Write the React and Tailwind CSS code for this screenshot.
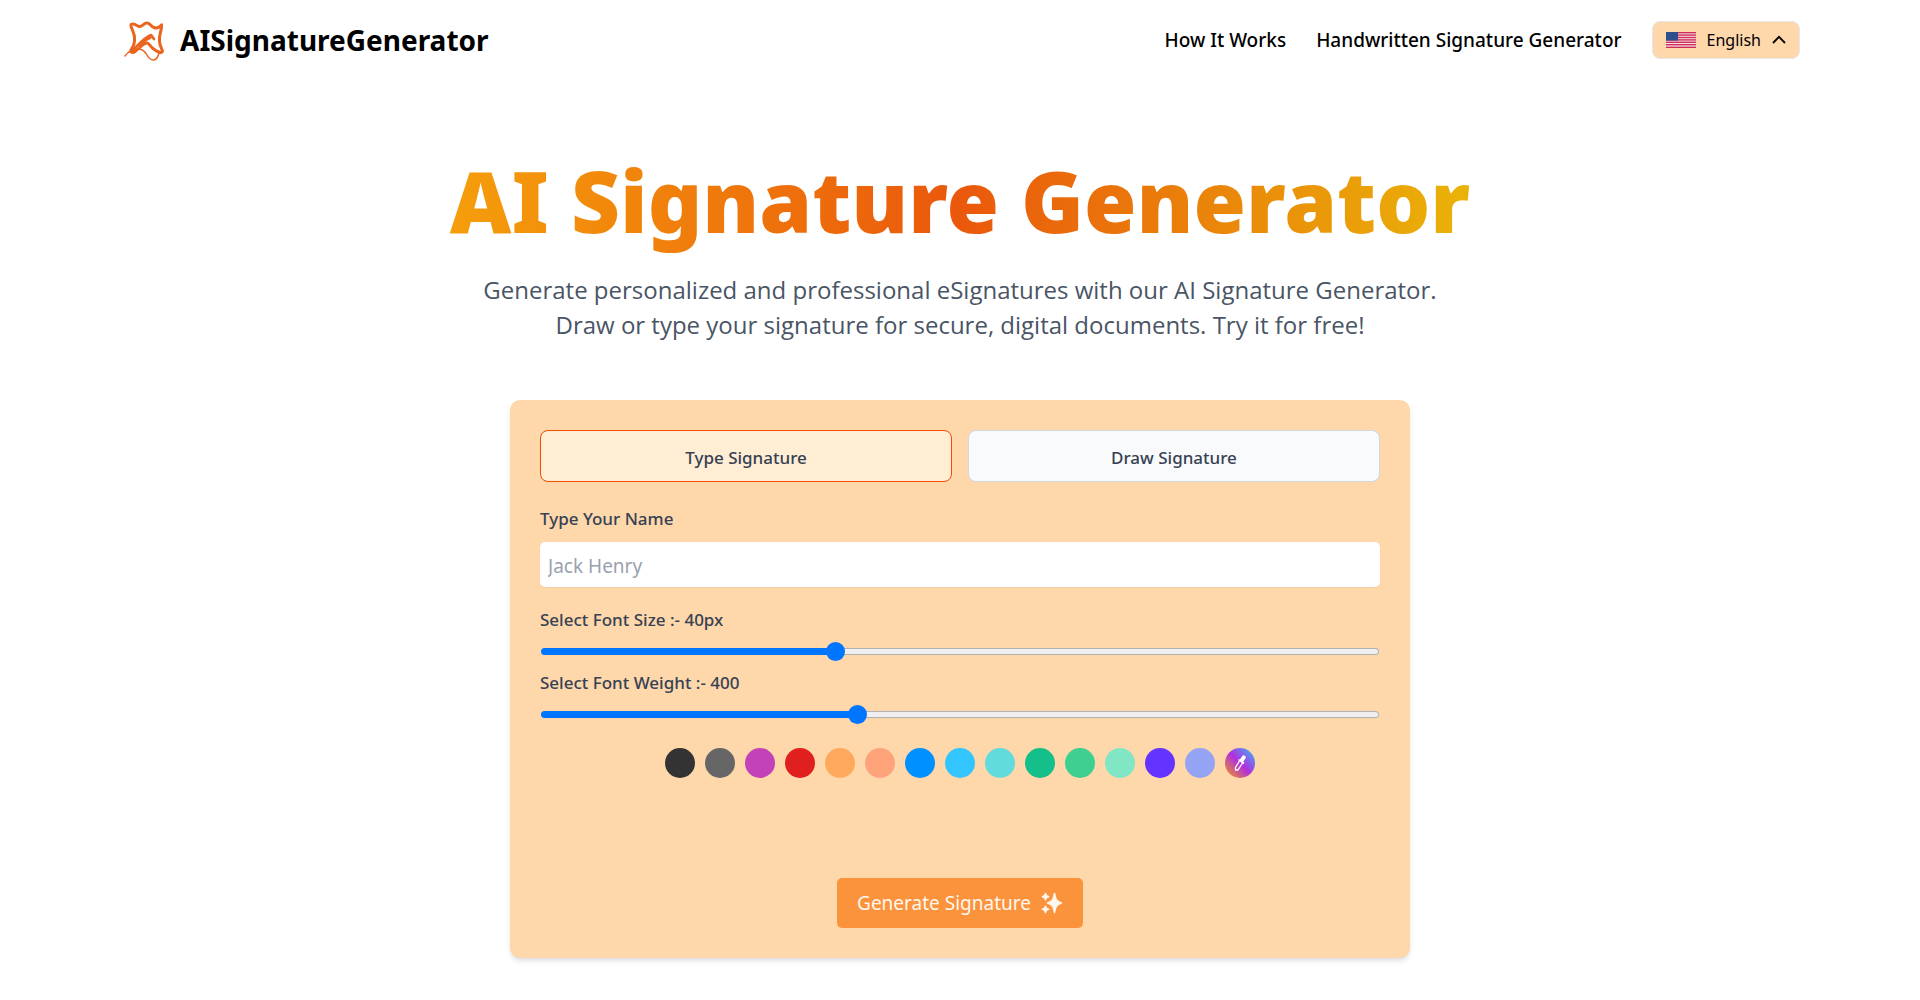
import { useState } from "react";

const swatches = [
  ["Black", "bg-[#333333]"],
  ["Gray", "bg-[#666666]"],
  ["Magenta", "bg-[#c342b8]"],
  ["Red", "bg-[#e01f1f]"],
  ["Orange", "bg-[#ffa95c]"],
  ["Salmon", "bg-[#ffa37a]"],
  ["Blue", "bg-[#0090ff]"],
  ["Sky", "bg-[#33c5ff]"],
  ["Aqua", "bg-[#61dbdb]"],
  ["Emerald", "bg-[#14bf8a]"],
  ["Green", "bg-[#3dd090]"],
  ["Mint", "bg-[#80e6c3]"],
  ["Violet", "bg-[#6333ff]"],
  ["Periwinkle", "bg-[#94a3f3]"],
];

function Logo() {
  return (
    <svg viewBox="0 0 50 50" className="size-[50px]" fill="none" stroke="#ea6520" strokeLinecap="round" strokeLinejoin="round" aria-hidden="true">
      <path d="M41.500 10 Q38 14 34 12.500 C30 11 30 8 27 8 C23 8 23 12 19 11.500 C16 10.500 14 8 11 9.500 C10 11 14 17 14.500 22 C15 27 13 32 11.500 34 C9.500 37 12 38.500 15 36.500" strokeWidth="3" />
      <path d="M41.500 10 C42 16 38.500 20 39.500 26 C39.500 31 42 34 42.500 36 C42 39.500 36 36 33 33.500 C30 31 29 28 27 28 C23 28 19 34 14 37" strokeWidth="3" />
      <path d="M13 35 C19 29 25 22 31 20 C32 21 33 23 34 24 M20 31 C23 27 26 24 30 23" strokeWidth="2.600" />
      <path d="M5 41 C8 37 12 34 18 34 C23 34 24 36 26 38.500 C28 42 31 45.500 34 45 C37 44.500 38 42 39 38" strokeWidth="1.500" />
    </svg>
  );
}

function Flag() {
  return (
    <svg viewBox="0 0 30 16" className="h-4 w-[30px]" aria-hidden="true">
      <rect width="30" height="16" fill="#f6e3ea" />
      {[0, 2.4, 4.8, 7.2, 9.6, 12, 14.6].map((y) => (
        <rect key={y} y={y} width="30" height="1.400" fill="#cf2d58" />
      ))}
      <rect width="12" height="8.500" fill="#1f3f80" />
      {[1, 3, 5, 7].map((y) =>
        [1, 3, 5, 7, 9, 11].map((x) => <circle key={x + "-" + y} cx={x} cy={y} r="0.450" fill="#a9bbdf" />)
      )}
    </svg>
  );
}

function Sparkles() {
  return (
    <svg viewBox="0 0 22 22" className="size-[22px]" fill="currentColor" aria-hidden="true">
      <path d="M13.500 1.500 C14.500 7.500 15.500 9.500 20.500 11 C15.500 12.500 14.500 14.500 13.500 20.500 C12.500 14.500 11.500 12.500 6.500 11 C11.500 9.500 12.500 7.500 13.500 1.500Z" stroke="currentColor" strokeWidth="1.600" strokeLinejoin="round" />
      <path d="M4.500 1.500 Q5 4.200 7.700 4.700 Q5 5.200 4.500 7.900 Q4 5.200 1.300 4.700 Q4 4.200 4.500 1.500Z M4.500 14.100 Q5 16.800 7.700 17.300 Q5 17.800 4.500 20.500 Q4 17.800 1.300 17.300 Q4 16.800 4.500 14.100Z" stroke="currentColor" strokeWidth="1.400" strokeLinejoin="round" />
    </svg>
  );
}

function Dropper() {
  return (
    <svg viewBox="0 0 18 18" className="size-[18px]" fill="none" stroke="#fff" strokeLinecap="round" strokeLinejoin="round" aria-hidden="true">
      <path d="M8.500 7 L4.500 13.500 L4.500 16 L7 16 L11.500 9" strokeWidth="1.300" />
      <path d="M8 6 L12.500 9" strokeWidth="1.600" />
      <path d="M11 6 L12.800 3.400" strokeWidth="4" />
    </svg>
  );
}

function Slider({ id, label, min, max, step, value, onChange }) {
  const fill = ((value - min) / (max - min)) * 100 + "%";
  return (
    <>
      <label htmlFor={id} className="text-[17px] leading-[25px] font-medium text-gray-700">
        {label}
      </label>
      <input
        id={id}
        type="range"
        min={min}
        max={max}
        step={step}
        value={value}
        onChange={(e) => onChange(Number(e.target.value))}
        style={{ "--fill": fill }}
        className="mx-px mt-[9px] mb-[9px] h-5 appearance-none bg-transparent [&::-webkit-slider-runnable-track]:h-[7px] [&::-webkit-slider-runnable-track]:rounded-full [&::-webkit-slider-runnable-track]:border [&::-webkit-slider-runnable-track]:border-transparent [&::-webkit-slider-runnable-track]:[background:linear-gradient(to_right,#0075ff_var(--fill),#efefef_var(--fill))_padding-box,linear-gradient(to_right,#0075ff_var(--fill),#b2b2b2_var(--fill))_border-box] [&::-webkit-slider-thumb]:-mt-[7px] [&::-webkit-slider-thumb]:size-[19px] [&::-webkit-slider-thumb]:appearance-none [&::-webkit-slider-thumb]:rounded-full [&::-webkit-slider-thumb]:bg-[#0075ff]"
      />
    </>
  );
}

export default function App() {
  const [mode, setMode] = useState("type");
  const [name, setName] = useState("");
  const [size, setSize] = useState(40);
  const [weight, setWeight] = useState(400);
  const tab = "flex-1 h-[52px] rounded-lg border pt-[3px] text-[17px] font-medium text-gray-700";
  const active = " border-orange-600 bg-orange-100";
  const idle = " border-gray-300 bg-gray-50";

  return (
    <div className="min-h-screen bg-white font-['Noto_Sans','Open_Sans',sans-serif] text-black">
      <header className="mx-auto flex h-20 max-w-[1680px] items-center justify-between">
        <a href="#" className="flex items-center gap-[10px] text-[28px] leading-9 font-bold">
          <Logo />
          AISignatureGenerator
        </a>
        <nav className="flex items-center gap-[30px] text-[19px] font-medium">
          <a href="#how">How It Works</a>
          <a href="#handwritten">Handwritten Signature Generator</a>
          <button type="button" className="flex h-[38px] items-center gap-[11px] rounded-lg border border-gray-200 bg-[#fed7aa] px-[13px] text-[16px] font-normal">
            <Flag />
            English
            <svg viewBox="0 0 14 10" className="h-[10px] w-[14px]" fill="none" stroke="currentColor" strokeWidth="1.800" aria-hidden="true">
              <path d="M1 8 L7 1.800 L13 8" />
            </svg>
          </button>
        </nav>
      </header>

      <main className="px-5 pt-16 pb-10">
        <h1 className="mx-auto w-fit bg-linear-to-r/srgb from-[#f59e0b] via-[#ea580c] to-[#eab308] bg-clip-text text-center text-[85px] leading-[112px] font-black text-transparent">
          AI Signature Generator
        </h1>
        <p className="mt-4 text-center font-['Open_Sans','Noto_Sans',sans-serif] text-[24px] leading-[35px] text-gray-600">
          Generate personalized and professional eSignatures with our AI Signature Generator.
          <br />
          Draw or type your signature for secure, digital documents. Try it for free!
        </p>

        <section className="mx-auto mt-[58px] flex max-w-[900px] flex-col rounded-[10px] bg-[#fed7aa] p-[30px] shadow-md">
          <div className="flex gap-4">
            <button type="button" onClick={() => setMode("type")} className={tab + (mode === "type" ? active : idle)}>
              Type Signature
            </button>
            <button type="button" onClick={() => setMode("draw")} className={tab + (mode === "draw" ? active : idle)}>
              Draw Signature
            </button>
          </div>

          <label htmlFor="name" className="mt-6 text-[17px] leading-[25px] font-medium text-gray-700">
            Type Your Name
          </label>
          <input
            id="name"
            value={name}
            onChange={(e) => setName(e.target.value)}
            placeholder="Jack Henry"
            className="mt-[11px] mb-5 h-[45px] rounded-[5px] bg-white px-2 pt-[3px] text-[19px] shadow-xs placeholder:text-gray-400"
          />

          <Slider id="size" label={"Select Font Size :- " + size + "px"} min={24} max={70} step={1} value={size} onChange={setSize} />
          <Slider id="weight" label={"Select Font Weight :- " + weight} min={100} max={900} step={100} value={weight} onChange={setWeight} />

          <div className="mt-[15px] flex flex-wrap justify-center gap-[10px]">
            {swatches.map(([label, color]) => (
              <button key={label} type="button" aria-label={label} className={"size-[30px] rounded-full " + color} />
            ))}
            <button type="button" aria-label="Pick a color" className="flex size-[30px] items-center justify-center rounded-full bg-linear-to-tr/srgb from-[#f59e0b] via-[#b02ee0] to-[#38bdf8]">
              <Dropper />
            </button>
          </div>

          <button type="button" className="mt-[100px] flex h-[50px] items-center gap-[10px] self-center rounded-[5px] bg-[#fb923c] px-5 text-[19px] text-orange-50">
            Generate Signature
            <Sparkles />
          </button>
        </section>
      </main>
    </div>
  );
}
